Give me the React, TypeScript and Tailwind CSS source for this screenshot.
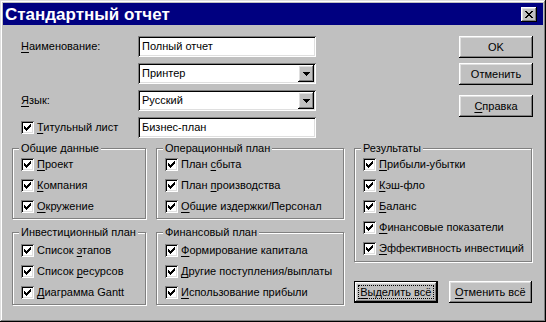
import React from 'react';

const raised =
  'shadow-[inset_-1px_-1px_0_#000,inset_1px_1px_0_#fff,inset_-2px_-2px_0_#808080,inset_2px_2px_0_#dfdfdf]';
const sunken =
  'shadow-[inset_1px_1px_0_#808080,inset_-1px_-1px_0_#fff,inset_2px_2px_0_#000,inset_-2px_-2px_0_#dfdfdf]';

// text with an underlined mnemonic letter
const Mn = ({ text, at = 0 }: { text: string; at?: number }) => (
  <span>
    {text.slice(0, at)}
    <span className="underline underline-offset-[2px]">{text[at]}</span>
    {text.slice(at + 1)}
  </span>
);

const Check = () => (
  <div className={`w-[13px] h-[13px] bg-white shrink-0 flex items-center justify-center ${sunken}`}>
    <svg width="7" height="7" viewBox="0 0 7 7" shapeRendering="crispEdges">
      <rect x="6" y="0" width="1" height="1" />
      <rect x="5" y="1" width="2" height="1" />
      <rect x="0" y="2" width="1" height="1" />
      <rect x="4" y="2" width="3" height="1" />
      <rect x="0" y="3" width="2" height="1" />
      <rect x="3" y="3" width="3" height="1" />
      <rect x="0" y="4" width="5" height="1" />
      <rect x="1" y="5" width="3" height="1" />
      <rect x="2" y="6" width="1" height="1" />
    </svg>
  </div>
);

const CheckRow = ({ text, at }: { text: string; at?: number }) => (
  <div className="h-[21px] flex items-center gap-[3px]">
    <Check />
    <Mn text={text} at={at} />
  </div>
);

const Field = ({ value, combo }: { value: string; combo?: boolean }) => (
  <div className={`w-[178px] h-[21px] bg-white flex items-center pl-[4px] pr-[2px] ${sunken}`}>
    <span className="flex-1">{value}</span>
    {combo && (
      <div className={`w-[16px] h-[17px] bg-[#c0c0c0] flex items-center justify-center ${raised}`}>
        <svg width="7" height="4" viewBox="0 0 7 4" shapeRendering="crispEdges">
          <rect x="0" y="0" width="7" height="1" />
          <rect x="1" y="1" width="5" height="1" />
          <rect x="2" y="2" width="3" height="1" />
          <rect x="3" y="3" width="1" height="1" />
        </svg>
      </div>
    )}
  </div>
);

const Button = ({ children, className = '' }: { children: React.ReactNode; className?: string }) => (
  <div className={`h-[22px] flex items-center justify-center bg-[#c0c0c0] ${raised} ${className}`}>
    {children}
  </div>
);

const Group = ({
  title,
  className = '',
  children,
}: {
  title: string;
  className?: string;
  children: React.ReactNode;
}) => (
  <div
    className={`relative border border-[#808080] shadow-[1px_1px_0_#fff,inset_1px_1px_0_#fff] pl-[8px] ${className}`}
  >
    <span className="absolute left-[6px] -top-[8px] bg-[#c0c0c0] px-[2px] leading-[14px]">{title}</span>
    {children}
  </div>
);

export default function App() {
  return (
    <div className="font-['Liberation_Sans',Arial,sans-serif] text-[11px] text-black">
      <div
        className={`w-[546px] h-[322px] bg-[#c0c0c0] p-[3px] flex flex-col shadow-[inset_-1px_-1px_0_#000,inset_1px_1px_0_#dfdfdf,inset_-2px_-2px_0_#808080,inset_2px_2px_0_#fff]`}
      >
        {/* title bar */}
        <div className="h-[22px] bg-[#000080] flex items-center pl-[2px] pr-[6px]">
          <span className="flex-1 text-white font-bold text-[17px] leading-none">Стандартный отчет</span>
          <div className={`w-[16px] h-[15px] bg-[#c0c0c0] flex items-center justify-center ${raised}`}>
            <svg width="8" height="7" viewBox="0 0 8 7" shapeRendering="crispEdges">
              <path d="M0 0h2v1h-2zM6 0h2v1h-2zM1 1h2v1h-2zM5 1h2v1h-2zM2 2h4v1h-4zM3 3h2v1h-2zM2 4h4v1h-4zM1 5h2v1h-2zM5 5h2v1h-2zM0 6h2v1h-2zM6 6h2v1h-2z" />
            </svg>
          </div>
        </div>

        {/* top form */}
        <div className="flex pt-[11px] pl-[18px]">
          <div className="flex flex-col gap-[6px]">
            <div className="flex items-center">
              <span className="w-[117px]">
                <Mn text="Наименование:" />
              </span>
              <Field value="Полный отчет" />
            </div>
            <div className="flex items-center pl-[117px]">
              <Field value="Принтер" combo />
            </div>
            <div className="flex items-center">
              <span className="w-[117px]">
                <Mn text="Язык:" />
              </span>
              <Field value="Русский" combo />
            </div>
            <div className="flex items-center">
              <div className="w-[117px] flex items-center gap-[3px]">
                <Check />
                <Mn text="Титульный лист" />
              </div>
              <Field value="Бизнес-план" />
            </div>
          </div>
          <div className="flex flex-col ml-[143px] w-[74px]">
            <Button>OK</Button>
            <Button className="mt-[5px]">Отменить</Button>
            <Button className="mt-[10px]">
              <Mn text="Справка" />
            </Button>
          </div>
        </div>

        {/* groups */}
        <div className="flex pl-[9px] pt-[10px] gap-[10px]">
          <div className="w-[134px] flex flex-col">
            <Group title="Общие данные" className="pt-[5px] pb-[1px]">
              <CheckRow text="Проект" />
              <CheckRow text="Компания" />
              <CheckRow text="Окружение" />
            </Group>
            <Group title="Инвестиционный план" className="mt-[13px] pt-[7px] pb-[1px]">
              <CheckRow text="Список этапов" at={7} />
              <CheckRow text="Список ресурсов" at={7} />
              <CheckRow text="Диаграмма Gantt" />
            </Group>
          </div>
          <div className="w-[188px] flex flex-col">
            <Group title="Операционный план" className="pt-[5px] pb-[1px]">
              <CheckRow text="План сбыта" at={5} />
              <CheckRow text="План производства" at={5} />
              <CheckRow text="Общие издержки/Персонал" />
            </Group>
            <Group title="Финансовый план" className="mt-[13px] pt-[7px] pb-[1px]">
              <CheckRow text="Формирование капитала" />
              <CheckRow text="Другие поступления/выплаты" />
              <CheckRow text="Использование прибыли" />
            </Group>
          </div>
          <div className="w-[178px] flex flex-col">
            <Group title="Результаты" className="pt-[5px] pb-[2px]">
              <CheckRow text="Прибыли-убытки" />
              <CheckRow text="Кэш-фло" />
              <CheckRow text="Баланс" />
              <CheckRow text="Финансовые показатели" />
              <CheckRow text="Эффективность инвестиций" />
            </Group>
            <div className="flex mt-[19px] gap-[11px]">
              <div className="w-[85px] h-[22px] border border-black">
                <div className={`w-full h-full flex items-center justify-center p-[3px] bg-[#c0c0c0] ${raised}`}>
                  <div className="w-full h-full border border-dotted border-black flex items-center justify-center">
                    <Mn text="Выделить всё" />
                  </div>
                </div>
              </div>
              <Button className="w-[85px]">
                <Mn text="Отменить всё" />
              </Button>
            </div>
          </div>
        </div>
      </div>
    </div>
  );
}
